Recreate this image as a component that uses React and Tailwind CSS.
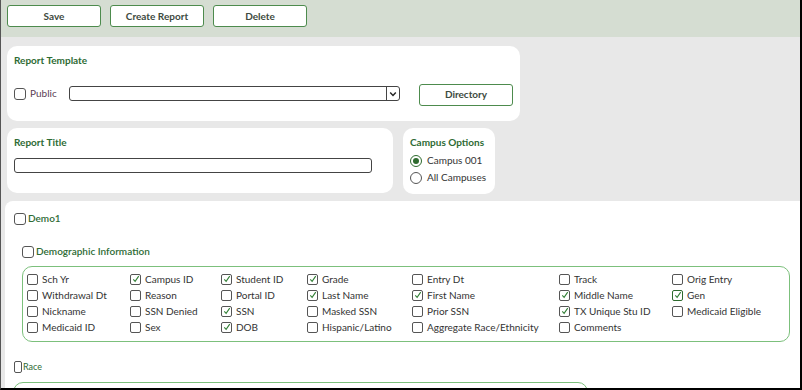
import { Fragment } from "react";

const font = { fontFamily: "Lato, 'Open Sans', sans-serif" };

const Check = ({ checked, focus, className = "" }) => (
  <span
    className={`inline-flex items-center justify-center w-[11px] h-[11px] shrink-0 rounded-[2px] bg-white border ${
      focus ? "border-[#2e6b2e]" : "border-[#555]"
    } ${className}`}
  >
    {checked && (
      <svg viewBox="0 0 10 10" className="w-[8px] h-[8px]">
        <path d="M1.6 5.4 L3.9 8 L8.4 1.4" fill="none" stroke="#2e7d32" strokeWidth="1.3" />
      </svg>
    )}
  </span>
);

const Radio = ({ checked }) => (
  <span className={`inline-flex items-center justify-center w-[12px] h-[12px] rounded-full bg-white border ${checked ? "border-[#2e6b2e] border-[1.5px]" : "border-[#555]"}`}>
    {checked && <span className="w-[6px] h-[6px] rounded-full bg-[#2e6b2e]" />}
  </span>
);

const Btn = ({ children, w = "w-[94px]" }) => (
  <button className={`${w} h-[22px] bg-white border border-[#4d8b4d] rounded-[3px] text-[10px] font-bold text-[#3d4a40]`}>
    {children}
  </button>
);

const demo = [
  [["Sch Yr", 0], ["Campus ID", 1], ["Student ID", 1], ["Grade", 1], ["Entry Dt", 0], ["Track", 0], ["Orig Entry", 0]],
  [["Withdrawal Dt", 0], ["Reason", 0], ["Portal ID", 0], ["Last Name", 1], ["First Name", 1], ["Middle Name", 1], ["Gen", 2]],
  [["Nickname", 0], ["SSN Denied", 0], ["SSN", 1], ["Masked SSN", 0], ["Prior SSN", 0], ["TX Unique Stu ID", 1], ["Medicaid Eligible", 0]],
  [["Medicaid ID", 0], ["Sex", 0], ["DOB", 1], ["Hispanic/Latino", 0], ["Aggregate Race/Ethnicity", 0], ["Comments", 0], null],
];

export default function App() {
  return (
    <div style={font} className="w-[802px] h-[390px] overflow-hidden bg-[#e8e8e8] border-l border-l-[#555] border-r-2 border-r-black border-b-2 border-b-black flex flex-col">
      <div className="h-[37px] bg-[#d5ddd2] flex items-start gap-[9px] pl-[6px] pt-[5px] shrink-0">
        <Btn>Save</Btn>
        <Btn>Create Report</Btn>
        <Btn>Delete</Btn>
      </div>

      <div className="pl-[6px] pt-[9px] flex flex-col gap-[7px]">
        <div className="w-[513px] h-[75px] bg-white rounded-[10px] px-[7px] pt-[7px]">
          <div className="text-[10px] font-bold text-[#2e6b34]">Report Template</div>
          <div className="flex items-center mt-[14px]">
            <Check className="w-[12px] h-[12px] rounded-[3px]" />
            <span className="ml-[4px] text-[10px] text-[#5b3f55]">Public</span>
            <div className="ml-[12px] w-[332px] h-[15px] border border-[#444] rounded-[3px] flex justify-end">
              <span className="w-[13px] border-l border-[#444] flex items-center justify-center">
                <svg viewBox="0 0 10 10" className="w-[8px] h-[8px]">
                  <path d="M1.5 3.2 L5 6.8 L8.5 3.2" fill="none" stroke="#222" strokeWidth="1.8" />
                </svg>
              </span>
            </div>
            <div className="ml-[19px] -mt-[2px]">
              <Btn>Directory</Btn>
            </div>
          </div>
        </div>

        <div className="flex gap-[10px]">
          <div className="w-[386px] h-[65px] bg-white rounded-[10px] px-[7px] pt-[7px]">
            <div className="text-[10px] font-bold text-[#2e6b34]">Report Title</div>
            <div className="mt-[8px] w-[358px] h-[15px] border border-[#444] rounded-[3px]" />
          </div>
          <div className="w-[92px] h-[66px] bg-white rounded-[10px] px-[7px] pt-[7px]">
            <div className="text-[10px] font-bold text-[#2e6b34]">Campus Options</div>
            <div className="flex items-center gap-[5px] mt-[3px]">
              <Radio checked />
              <span className="text-[10px] text-[#333]">Campus 001</span>
            </div>
            <div className="flex items-center gap-[5px] mt-[2px]">
              <Radio />
              <span className="text-[10px] text-[#333]">All Campuses</span>
            </div>
          </div>
        </div>
      </div>

      <div className="mt-[7px] ml-[4px] flex-1 bg-white rounded-tl-[8px] pl-[9px] pt-[10px]">
        <div className="flex items-center gap-[2px]">
          <Check className="w-[12px] h-[12px] rounded-[3px]" />
          <span className="text-[10px] font-semibold text-[#2e6b34]">Demo1</span>
        </div>
        <div className="flex items-center gap-[2px] mt-[18px] ml-[8px]">
          <Check className="w-[12px] h-[12px] rounded-[3px]" />
          <span className="text-[10px] font-semibold text-[#2e6b34]">Demographic Information</span>
        </div>
        <div className="mt-[7px] ml-[8px] w-[768px] h-[76px] border border-[#7cc07c] rounded-[10px] pl-[4px] pt-[4px] grid grid-cols-[103px_91px_86px_105px_147px_113px_1fr] auto-rows-[16px]">
          {demo.map((row, i) => (
            <Fragment key={i}>
              {row.map((c, j) =>
                c ? (
                  <div key={j} className="flex items-center gap-[4px]">
                    <Check checked={c[1] > 0} focus={c[1] === 2} />
                    <span className="text-[10px] text-[#333] whitespace-nowrap">{c[0]}</span>
                  </div>
                ) : (
                  <div key={j} />
                )
              )}
            </Fragment>
          ))}
        </div>
        <div className="flex items-center gap-[1px] mt-[18px]">
          <span className="w-[8px] h-[12px] border border-[#555] rounded-[2px]" />
          <span className="text-[9px] text-[#2e6b34]">Race</span>
        </div>
        <div className="mt-[8px] -ml-[1px] w-[575px] h-[30px] border border-[#7cc07c] rounded-[10px]" />
      </div>
    </div>
  );
}
